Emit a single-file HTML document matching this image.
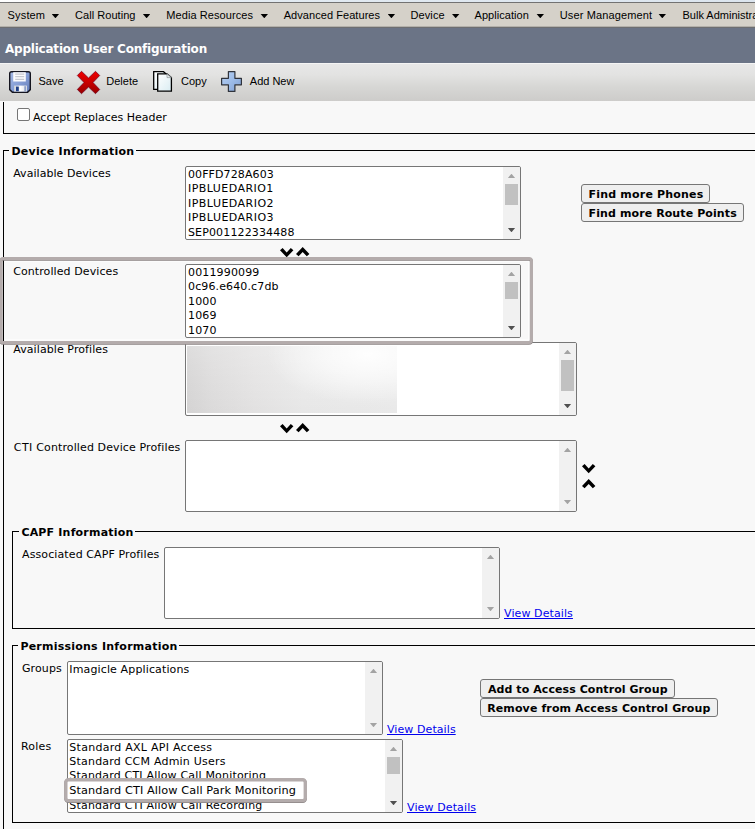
<!DOCTYPE html>
<html>
<head>
<meta charset="utf-8">
<title>Application User Configuration</title>
<style>
html,body{margin:0;padding:0;}
body{width:755px;height:829px;overflow:hidden;position:relative;background:#f8f8f8;
  font-family:"DejaVu Sans","Liberation Sans",sans-serif;font-size:11px;line-height:13px;color:#000;}
.abs{position:absolute;}
.t{position:absolute;white-space:nowrap;line-height:13px;}
/* top bars */
#topwhite{left:0;top:0;width:755px;height:2px;background:linear-gradient(90deg,#ffffff 0%,#f1f5f9 12%,#e2eaf1 35%,#dce5ee 100%);}
#topline{left:0;top:2px;width:755px;height:1px;background:#727272;}
#menubar{left:0;top:3px;width:755px;height:23px;background:#d5d1c9;}
#menuline{left:0;top:26px;width:755px;height:2px;background:linear-gradient(#b3b0aa 0,#b3b0aa 1px,#6d6e71 1px,#6d6e71 2px);}
#titlebar{left:0;top:28px;width:755px;height:35px;background:#6b7486;}
#toolbar{left:0;top:63px;width:755px;height:38px;background:linear-gradient(#f4f4f4 0,#f4f4f4 1px,#e7e7e7 1.5px,#e3e3e2 30%,#d7d7d5 62%,#cdccca 100%);}
.m{position:absolute;top:9px;font:11px/12px "Liberation Sans",sans-serif;white-space:nowrap;color:#000;}
.ma{position:absolute;top:13.8px;width:7.8px;height:4.4px;background:#000;clip-path:polygon(0 0,100% 0,50% 100%);}
#title{left:5px;top:42px;font:bold 12px/15px "DejaVu Sans",sans-serif;color:#fff;letter-spacing:-0.22px;}
.tb{position:absolute;top:75px;font:11px/12px "Liberation Sans",sans-serif;white-space:nowrap;}
/* fieldset lines */
.ln{position:absolute;background:#000;}
.lg{position:absolute;white-space:nowrap;font-weight:bold;font-size:11px;line-height:13px;background:#f8f8f8;padding:0 2px;}
/* selects */
.sel{position:absolute;box-sizing:border-box;border:1px solid #767676;border-radius:2px;background:#fff;overflow:hidden;}
.sel .o{position:absolute;left:2px;white-space:nowrap;line-height:13px;}
.sb{position:absolute;top:0;right:0;width:17px;height:100%;background:#f1f1f1;}
.up,.dn{position:absolute;left:4.7px;width:7.6px;height:4.4px;background:#a3a3a3;}
.up{top:6.8px;clip-path:polygon(50% 0,100% 100%,0 100%);}
.dn{bottom:6.8px;clip-path:polygon(0 0,100% 0,50% 100%);}
.dn.on,.up.on{background:#505050;}
.th{position:absolute;left:2px;width:13px;background:#c1c1c1;}
/* buttons */
.btn{position:absolute;box-sizing:border-box;height:19px;border:1px solid #767676;border-radius:3px;background:#efefef;
  font-weight:bold;font-size:11px;line-height:13px;white-space:nowrap;padding:3px 0 0 7px;}
a.vd{position:absolute;color:#0000ee;text-decoration:underline;white-space:nowrap;line-height:13px;}
.hl{position:absolute;box-sizing:border-box;border:3px solid #b3abab;border-radius:5px;}
svg{position:absolute;overflow:visible;}
</style>
</head>
<body>
<!-- ===== top bars ===== -->
<div class="abs" id="topwhite"></div>
<div class="abs" id="topline"></div>
<div class="abs" id="menubar"></div>
<div class="abs" id="menuline"></div>
<div class="abs" id="titlebar"></div>
<div class="abs" id="toolbar"></div>

<span class="m" style="left:7.6px;letter-spacing:0.15px">System</span><i class="ma" style="left:51.5px"></i>
<span class="m" style="left:75px;letter-spacing:0.05px">Call Routing</span><i class="ma" style="left:142.7px"></i>
<span class="m" style="left:166.3px;letter-spacing:0.08px">Media Resources</span><i class="ma" style="left:260.4px"></i>
<span class="m" style="left:283.7px;letter-spacing:0.06px">Advanced Features</span><i class="ma" style="left:387.5px"></i>
<span class="m" style="left:410.5px;letter-spacing:0.1px">Device</span><i class="ma" style="left:451.8px"></i>
<span class="m" style="left:474.5px;letter-spacing:0.05px">Application</span><i class="ma" style="left:536.4px"></i>
<span class="m" style="left:559.8px;letter-spacing:0.12px">User Management</span><i class="ma" style="left:658.4px"></i>
<span class="m" style="left:682.5px">Bulk Administration</span>

<span class="t" id="title">Application User Configuration</span>

<span class="tb" style="left:38.5px">Save</span>
<span class="tb" style="left:106.3px">Delete</span>
<span class="tb" style="left:181px">Copy</span>
<span class="tb" style="left:249.8px">Add New</span>

<!-- ICONS -->
<svg style="left:9px;top:71px" width="22" height="22" viewBox="0 0 22 22">
  <defs>
    <linearGradient id="gfl" x1="0" y1="0" x2="1" y2="1"><stop offset="0" stop-color="#a6bae6"/><stop offset="0.5" stop-color="#879fd6"/><stop offset="1" stop-color="#627cb8"/></linearGradient>
    <linearGradient id="gsh" x1="0" y1="0" x2="1" y2="0"><stop offset="0" stop-color="#c9ced8"/><stop offset="0.5" stop-color="#ffffff"/><stop offset="1" stop-color="#d5d9e2"/></linearGradient>
    <linearGradient id="grx" x1="0" y1="0" x2="0" y2="1"><stop offset="0" stop-color="#f00000"/><stop offset="0.5" stop-color="#c80000"/><stop offset="1" stop-color="#960000"/></linearGradient>
    <linearGradient id="gpg" x1="0" y1="0" x2="1" y2="1"><stop offset="0" stop-color="#ffffff"/><stop offset="1" stop-color="#d9ecf2"/></linearGradient>
    <linearGradient id="gpl" x1="0" y1="0" x2="1" y2="1"><stop offset="0" stop-color="#b7d1f3"/><stop offset="0.5" stop-color="#9dbce8"/><stop offset="1" stop-color="#7f9fd2"/></linearGradient>
  </defs>
  <path d="M2.6 0.7 H19.4 Q21.3 0.7 21.3 2.6 V18.6 L18.6 21.3 H3.4 L0.7 18.6 V2.6 Q0.7 0.7 2.6 0.7 Z" fill="url(#gfl)" stroke="#15151f" stroke-width="1.4"/>
  <rect x="4.2" y="1.2" width="12.6" height="9.3" fill="#fbfbfd"/>
  <rect x="6.2" y="2.6" width="9" height="1" fill="#b9bcc6"/>
  <rect x="6.2" y="5.2" width="9" height="1" fill="#b9bcc6"/>
  <rect x="6.2" y="7.8" width="9" height="1" fill="#b9bcc6"/>
  <rect x="5" y="14.6" width="13" height="6" fill="url(#gsh)"/>
  <rect x="7" y="15.6" width="2.8" height="4.6" fill="#1f3f86"/>
  <rect x="15.5" y="15.2" width="1.2" height="5" fill="#6a82b8"/>
</svg>
<svg style="left:77px;top:71px" width="23" height="23" viewBox="0 0 23 23">
  <path d="M4.5 0.3 L11.5 7 L18.5 0.3 L22.7 4.5 L16 11.5 L22.7 18.5 L18.5 22.7 L11.5 16 L4.5 22.7 L0.3 18.5 L7 11.5 L0.3 4.5 Z" fill="url(#grx)" stroke="#6e0524" stroke-width="0.7"/>
</svg>
<svg style="left:153px;top:71px" width="20" height="21" viewBox="0 0 20 21">
  <path d="M0.7 0.7 H10.5 L12.6 2.6 V18.4 H0.7 Z" fill="url(#gpg)" stroke="#000" stroke-width="1.3"/>
  <path d="M4.7 2.9 H14 L18.4 6.6 V20.2 H4.7 Z" fill="url(#gpg)" stroke="#000" stroke-width="1.3"/>
  <path d="M14 2.9 V6.6 H18.4 Z" fill="#e4e8ea" stroke="#8f9699" stroke-width="0.7"/>
</svg>
<svg style="left:221px;top:71px" width="21" height="21" viewBox="0 0 21 21">
  <path d="M7.4 0.6 H13.9 V7.3 H20.4 V13.8 H13.9 V20.4 H7.4 V13.8 H0.6 V7.3 H7.4 Z" fill="url(#gpl)" stroke="#30343c" stroke-width="1.2" stroke-linejoin="round"/>
</svg>

<!-- ===== first (partial) fieldset ===== -->
<div class="ln" style="left:3px;top:102px;width:1px;height:32px"></div>
<div class="ln" style="left:3px;top:133px;width:752px;height:1px"></div>
<div class="abs" style="left:17px;top:108px;width:13px;height:13px;box-sizing:border-box;border:1px solid #767676;border-radius:2px;background:#fff"></div>
<span class="t" style="left:33px;top:111px">Accept Replaces Header</span>

<!-- ===== Device Information fieldset ===== -->
<div class="ln" style="left:3px;top:150px;width:752px;height:1px"></div>
<div class="ln" style="left:3px;top:150px;width:1px;height:679px"></div>
<span class="lg" style="left:9.4px;top:145px;letter-spacing:0.26px">Device Information</span>

<span class="t" style="left:13.2px;top:167px;letter-spacing:0.05px">Available Devices</span>
<div class="sel" style="left:185px;top:166px;width:336px;height:74px">
  <span class="o" style="top:1px;letter-spacing:0.1px">00FFD728A603</span>
  <span class="o" style="top:15px;letter-spacing:0.45px">IPBLUEDARIO1</span>
  <span class="o" style="top:30px;letter-spacing:0.47px">IPBLUEDARIO2</span>
  <span class="o" style="top:44px;letter-spacing:0.47px">IPBLUEDARIO3</span>
  <span class="o" style="top:59px;letter-spacing:0.14px">SEP001122334488</span>
  <div class="sb"><i class="up"></i><div class="th" style="top:17px;height:21px"></div><i class="dn on"></i></div>
</div>

<div class="btn" style="left:581px;top:184px;width:129px;letter-spacing:0.19px;padding-left:6.6px">Find more Phones</div>
<div class="btn" style="left:581px;top:203px;width:163px;letter-spacing:0.1px;padding-left:6.6px">Find more Route Points</div>

<!-- chevrons 1 -->
<svg style="left:279.8px;top:247.8px" width="14" height="10" viewBox="0 0 14 10"><polygon points="0,2.3 2.6,0 6.7,4.4 10.8,0 13.4,2.3 6.7,9.3" fill="#000"/></svg>
<svg style="left:295.7px;top:246.8px" width="14" height="10" viewBox="0 0 14 10"><polygon points="6.7,0 13.4,7 10.8,9.3 6.7,4.9 2.6,9.3 0,7" fill="#000"/></svg>

<!-- Available Profiles (under the highlight box) -->
<span class="t" style="left:13.2px;top:343px;letter-spacing:0.09px">Available Profiles</span>
<div class="sel" style="left:185px;top:342px;width:392px;height:74px">
  <div class="abs" style="left:1px;top:3px;width:210px;height:67px;background:radial-gradient(ellipse 48% 75% at 86% 12%,rgba(255,255,255,0.95) 0%,rgba(255,255,255,0.6) 45%,rgba(255,255,255,0) 100%),linear-gradient(180deg,rgba(255,255,255,0.15) 0%,rgba(255,255,255,0) 50%,rgba(0,0,0,0.02) 100%),linear-gradient(90deg,#d8d7d7 0%,#dfdede 12%,#e6e5e5 32%,#ebebeb 55%,#ededed 100%)"></div>
  <div class="sb"><i class="up"></i><div class="th" style="top:17px;height:31px"></div><i class="dn on"></i></div>
</div>

<!-- highlight box: controlled devices -->
<svg style="left:0;top:250px" width="540" height="100" viewBox="0 250 540 100"><path d="M4.6 261.1 H529 V339.9 H4.6" fill="none" stroke="#ffffff" stroke-opacity="0.75" stroke-width="1.4"/><rect x="0.85" y="259.25" width="530.6" height="84" rx="2.5" fill="none" stroke="#8a8383" stroke-width="3.1"/><rect x="0.85" y="258.5" width="530.6" height="84" rx="2.5" fill="none" stroke="#b4acac" stroke-width="3.1"/></svg>
<span class="t" style="left:13.2px;top:265px;letter-spacing:0.09px">Controlled Devices</span>
<div class="sel" style="left:185px;top:264px;width:336px;height:74px">
  <span class="o" style="top:1px;letter-spacing:0.15px">0011990099</span>
  <span class="o" style="top:15px;letter-spacing:0.13px">0c96.e640.c7db</span>
  <span class="o" style="top:30px;letter-spacing:0.15px">1000</span>
  <span class="o" style="top:44px;letter-spacing:0.15px">1069</span>
  <span class="o" style="top:59px;letter-spacing:0.15px">1070</span>
  <div class="sb"><i class="up"></i><div class="th" style="top:17px;height:17px"></div><i class="dn on"></i></div>
</div>

<!-- chevrons 2 -->
<svg style="left:279.8px;top:423.8px" width="14" height="10" viewBox="0 0 14 10"><polygon points="0,2.3 2.6,0 6.7,4.4 10.8,0 13.4,2.3 6.7,9.3" fill="#000"/></svg>
<svg style="left:295.7px;top:422.8px" width="14" height="10" viewBox="0 0 14 10"><polygon points="6.7,0 13.4,7 10.8,9.3 6.7,4.9 2.6,9.3 0,7" fill="#000"/></svg>

<span class="t" style="left:13.8px;top:441px;letter-spacing:0.115px"><span style="letter-spacing:0.4px">CTI</span> Controlled Device Profiles</span>
<div class="sel" style="left:185px;top:440px;width:392px;height:72px">
  <div class="sb"><i class="up"></i><i class="dn"></i></div>
</div>
<!-- side chevrons -->
<svg style="left:581.9px;top:463.9px" width="14" height="10" viewBox="0 0 14 10"><polygon points="0,2.3 2.6,0 6.7,4.4 10.8,0 13.4,2.3 6.7,9.3" fill="#000"/></svg>
<svg style="left:581.9px;top:478.8px" width="14" height="10" viewBox="0 0 14 10"><polygon points="6.7,0 13.4,7 10.8,9.3 6.7,4.9 2.6,9.3 0,7" fill="#000"/></svg>

<!-- ===== CAPF Information ===== -->
<div class="ln" style="left:12px;top:531px;width:743px;height:1px"></div>
<div class="ln" style="left:12px;top:531px;width:1px;height:98px"></div>
<div class="ln" style="left:12px;top:628px;width:743px;height:1px"></div>
<span class="lg" style="left:19.4px;top:526px;letter-spacing:0.19px">CAPF Information</span>
<span class="t" style="left:22px;top:548px;letter-spacing:0.11px">Associated CAPF Profiles</span>
<div class="sel" style="left:164px;top:547px;width:336px;height:72px">
  <div class="sb"><i class="up"></i><i class="dn"></i></div>
</div>
<a class="vd" style="left:504px;top:607px;letter-spacing:0.1px">View Details</a>

<!-- ===== Permissions Information ===== -->
<div class="ln" style="left:12px;top:645px;width:743px;height:1px"></div>
<div class="ln" style="left:12px;top:645px;width:1px;height:178px"></div>
<div class="ln" style="left:12px;top:822px;width:743px;height:1px"></div>
<span class="lg" style="left:18.4px;top:640px;letter-spacing:0.23px">Permissions Information</span>
<span class="t" style="left:22px;top:662px;letter-spacing:0.1px">Groups</span>
<div class="sel" style="left:67px;top:661px;width:316px;height:74px">
  <span class="o" style="top:1px;left:1.3px;letter-spacing:0.135px">Imagicle Applications</span>
  <div class="sb"><i class="up"></i><i class="dn"></i></div>
</div>
<a class="vd" style="left:387px;top:723px;letter-spacing:0.08px">View Details</a>
<div class="btn" style="left:480px;top:679px;width:195px;letter-spacing:0.07px">Add to Access Control Group</div>
<div class="btn" style="left:480px;top:698px;width:238px;letter-spacing:0.12px;padding-left:6.2px">Remove from Access Control Group</div>

<span class="t" style="left:21px;top:740px;letter-spacing:0.2px">Roles</span>
<div class="sel" style="left:67px;top:739px;width:336px;height:74px">
  <span class="o" style="top:1px;left:1.3px;letter-spacing:0.27px">Standard AXL API Access</span>
  <span class="o" style="top:15px;left:1.3px;letter-spacing:0.21px">Standard CCM Admin Users</span>
  <span class="o" style="top:29px;left:1.3px;letter-spacing:0.19px">Standard CTI Allow Call Monitoring</span>
  <span class="o" style="top:59px;left:1.3px;letter-spacing:0.2px">Standard CTI Allow Call Recording</span>
  <div class="sb"><i class="up"></i><div class="th" style="top:17px;height:17px"></div><i class="dn on"></i></div>
</div>
<!-- highlight box: role -->
<svg style="left:60px;top:774px" width="252" height="32" viewBox="60 774 252 32"><rect x="65.8" y="780.4" width="239.5" height="20.8" rx="2.6" fill="none" stroke="#8d8686" stroke-width="3.4"/><rect x="65.8" y="779.8" width="239.5" height="20.8" rx="2.6" fill="#fff" stroke="#b4acac" stroke-width="3.4"/></svg>
<span class="t" style="left:69.3px;top:784px;font-size:11.3px;letter-spacing:0.08px">Standard CTI Allow Call Park Monitoring</span>
<a class="vd" style="left:407px;top:801px;letter-spacing:0.12px">View Details</a>

</body>
</html>
